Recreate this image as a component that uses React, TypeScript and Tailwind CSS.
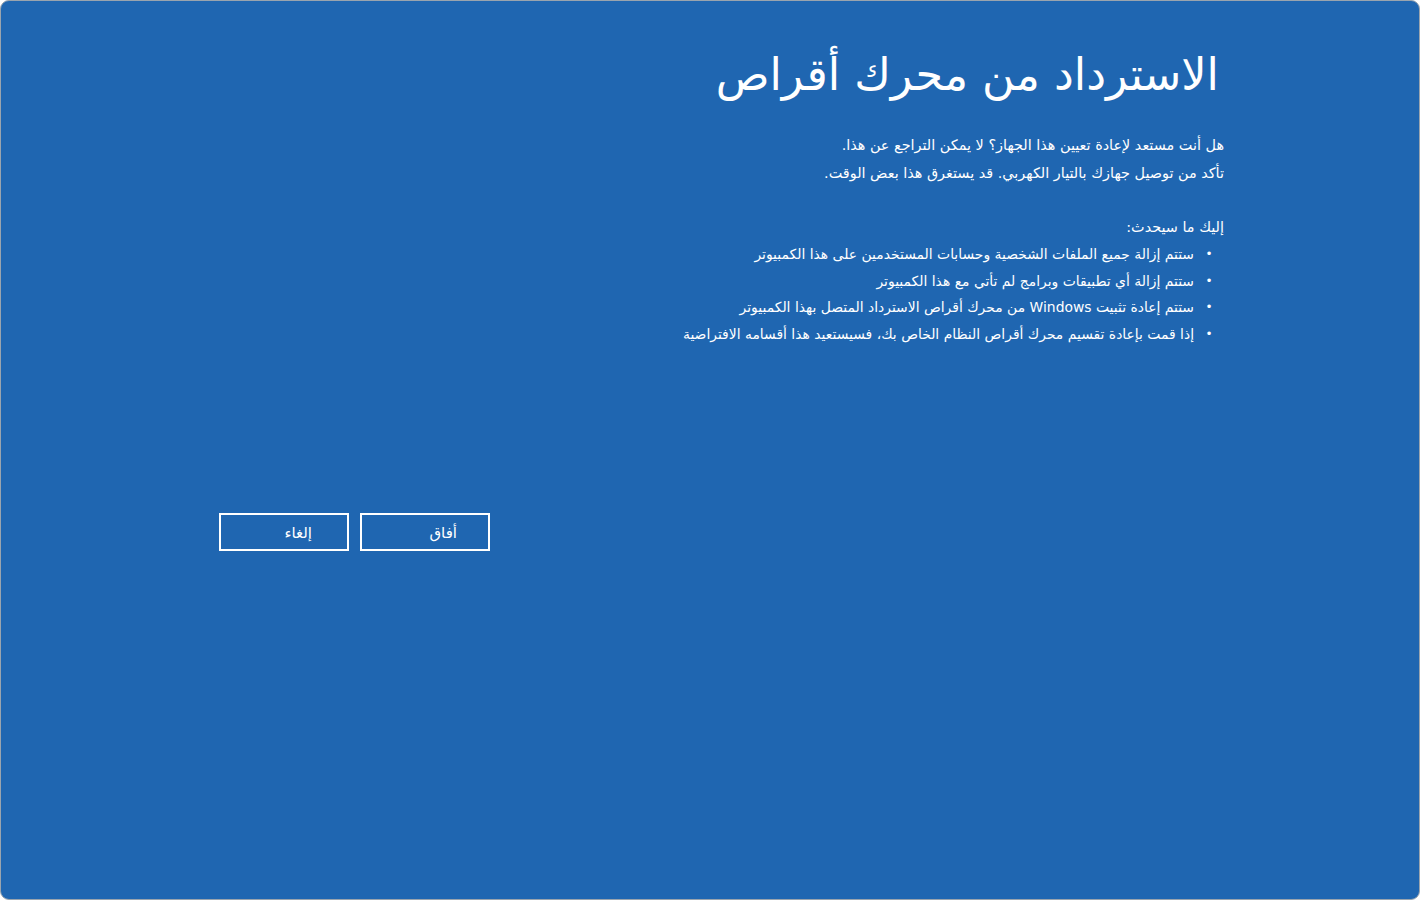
import React from "react";

export default function App() {
  const font = { fontFamily: '"DejaVu Sans", "Noto Sans", sans-serif' };
  return (
    <div className="w-[1420px] h-[900px] bg-white p-0">
      <div className="w-[1420px] h-[900px] bg-[#1f66b1] border border-[#9aa4ae] rounded-[9px] overflow-hidden flex flex-col text-white" style={font}>
        <div dir="rtl" className="pr-[195px] pt-[38px] flex flex-col items-start">
          <h1 className="mr-[5px] text-[44.5px] leading-[72px] font-normal">الاسترداد من محرك أقراص</h1>
          <div className="mt-[20px] text-[14.4px] leading-[28px]">
            <p>هل أنت مستعد لإعادة تعيين هذا الجهاز؟ لا يمكن التراجع عن هذا.</p>
            <p>تأكد من توصيل جهازك بالتيار الكهربي. قد يستغرق هذا بعض الوقت.</p>
          </div>
          <p className="mt-[26px] text-[14.4px] leading-[28px]">إليك ما سيحدث:</p>
          <ul className="text-[13.9px] leading-[26.7px]">
            {[
              "ستتم إزالة جميع الملفات الشخصية وحسابات المستخدمين على هذا الكمبيوتر",
              "ستتم إزالة أي تطبيقات وبرامج لم تأتي مع هذا الكمبيوتر",
              "ستتم إعادة تثبيت Windows من محرك أقراص الاسترداد المتصل بهذا الكمبيوتر",
              "إذا قمت بإعادة تقسيم محرك أقراص النظام الخاص بك، فسيستعيد هذا أقسامه الافتراضية",
            ].map((t) => (
              <li key={t} className="flex items-center">
                <span className="w-[30px] flex justify-center text-[12px]">•</span>
                <span>{t}</span>
              </li>
            ))}
          </ul>
        </div>
        <div className="mt-[165px] pl-[218px] flex gap-[11px]">
          <div dir="rtl" className="w-[130px] h-[38px] border-2 border-white flex items-center justify-start pt-[3px] pr-[35px] text-[15px]">
            إلغاء
          </div>
          <div dir="rtl" className="w-[130px] h-[38px] border-2 border-white flex items-center justify-start pt-[3px] pr-[31px] text-[15px]">
            أفاق
          </div>
        </div>
      </div>
    </div>
  );
}
